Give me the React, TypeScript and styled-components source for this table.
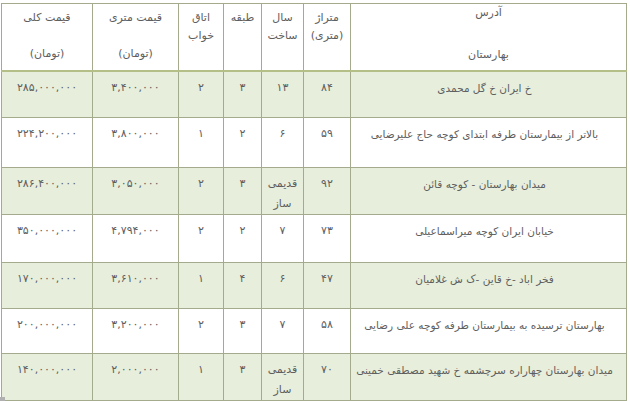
import React from 'react';
import styled, { createGlobalStyle } from 'styled-components';

interface Listing {
  address: string;
  area: string;
  built: string;
  floor: string;
  rooms: string;
  unitPrice: string;
  total: string;
  height: number;
}

const listings: Listing[] = [
  { address: 'خ ایران خ گل محمدی', area: '۸۴', built: '۱۳', floor: '۳', rooms: '۲', unitPrice: '۳,۴۰۰,۰۰۰', total: '۲۸۵,۰۰۰,۰۰۰', height: 47 },
  { address: 'بالاتر از بیمارستان طرفه ابتدای کوچه حاج علیرضایی', area: '۵۹', built: '۶', floor: '۲', rooms: '۱', unitPrice: '۳,۸۰۰,۰۰۰', total: '۲۲۴,۲۰۰,۰۰۰', height: 50 },
  { address: 'میدان بهارستان - کوچه قائن', area: '۹۲', built: 'قدیمی ساز', floor: '۳', rooms: '۲', unitPrice: '۳,۰۵۰,۰۰۰', total: '۲۸۶,۴۰۰,۰۰۰', height: 45 },
  { address: 'خیابان ایران کوچه میراسماعیلی', area: '۷۳', built: '۷', floor: '۲', rooms: '۲', unitPrice: '۴,۷۹۴,۰۰۰', total: '۳۵۰,۰۰۰,۰۰۰', height: 48 },
  { address: 'فخر اباد -خ قاین -ک ش غلامیان', area: '۴۷', built: '۶', floor: '۴', rooms: '۱', unitPrice: '۳,۶۱۰,۰۰۰', total: '۱۷۰,۰۰۰,۰۰۰', height: 46 },
  { address: 'بهارستان ترسیده به بیمارستان طرفه کوچه علی رضایی', area: '۵۸', built: '۷', floor: '۳', rooms: '۲', unitPrice: '۳,۲۰۰,۰۰۰', total: '۲۰۰,۰۰۰,۰۰۰', height: 45 },
  { address: 'میدان بهارستان چهاراره سرچشمه خ شهید مصطقی خمینی', area: '۷۰', built: 'قدیمی ساز', floor: '۳', rooms: '۱', unitPrice: '۲,۰۰۰,۰۰۰', total: '۱۴۰,۰۰۰,۰۰۰', height: 46 },
];

export default function App() {
  return (
    <>
      <GlobalStyle />
      <Page>
        <Table>
          <colgroup>
            <col style={{ width: 276 }} />
            <col style={{ width: 47 }} />
            <col style={{ width: 42 }} />
            <col style={{ width: 38 }} />
            <col style={{ width: 45 }} />
            <col style={{ width: 86 }} />
            <col style={{ width: 91 }} />
          </colgroup>
          <thead>
            <tr>
              <HeadCell>
                <AddressTitle>آدرس</AddressTitle>
                <AddressArea>بهارستان</AddressArea>
              </HeadCell>
              <HeadCell>متراژ<br />(متری)</HeadCell>
              <HeadCell>سال<br />ساخت</HeadCell>
              <HeadCell>طبقه</HeadCell>
              <HeadCell>اتاق<br />خواب</HeadCell>
              <HeadCell>قیمت متری<br /><br />(تومان)</HeadCell>
              <HeadCell>قیمت کلی<br /><br />(تومان)</HeadCell>
            </tr>
          </thead>
          <tbody>
            {listings.map((item, i) => (
              <Row key={i} $shaded={i % 2 === 0} style={{ height: item.height }}>
                <AddressCell>{item.address}</AddressCell>
                <Cell>{item.area}</Cell>
                <Cell>
                  {item.built === 'قدیمی ساز' ? (
                    <>قدیمی<br />ساز</>
                  ) : (
                    item.built
                  )}
                </Cell>
                <Cell>{item.floor}</Cell>
                <Cell>{item.rooms}</Cell>
                <Cell>{item.unitPrice}</Cell>
                <Cell>{item.total}</Cell>
              </Row>
            ))}
          </tbody>
        </Table>
        <EndMark />
      </Page>
    </>
  );
}

const GlobalStyle = createGlobalStyle`
  body {
    margin: 0;
    background: #ffffff;
    font-family: "DejaVu Sans", "Noto Sans", sans-serif;
  }
`;

const Page = styled.div`
  position: relative;
  width: 630px;
  height: 401px;
  padding: 3px 4px 0 1px;
  box-sizing: border-box;
  overflow: hidden;
`;

const Table = styled.table`
  direction: rtl;
  width: 625px;
  table-layout: fixed;
  border-collapse: collapse;
  border: 1px solid #a4ab8d;
  color: #5e5e5e;
  font-size: 11px;
`;

const HeadCell = styled.th`
  height: 67px;
  padding: 5px 2px 0;
  border-left: 1px solid #a4ab8d;
  border-bottom: 2px solid #b3bf86;
  vertical-align: top;
  text-align: center;
  font-weight: normal;
  line-height: 18px;
  box-sizing: border-box;
`;

const AddressTitle = styled.div`
  line-height: 14px;
  margin-top: -3px;
`;

const AddressArea = styled.div`
  line-height: 14px;
  margin-top: 28px;
`;

interface RowProps {
  $shaded: boolean;
}

const Row = styled.tr<RowProps>`
  background: ${({ $shaded }) => ($shaded ? '#e7eedb' : '#ffffff')};
`;

const Cell = styled.td`
  padding: 6px 2px 0;
  border-left: 1px solid #a4ab8d;
  border-bottom: 1px solid #a4ab8d;
  vertical-align: top;
  text-align: center;
  line-height: 20px;
  white-space: nowrap;
`;

const AddressCell = styled(Cell)`
  font-size: 10.5px;
  padding-right: 10px;
`;

const EndMark = styled.div`
  position: absolute;
  left: 0;
  top: 397px;
  width: 5px;
  height: 4px;
  background: #b0b0b0;
`;
